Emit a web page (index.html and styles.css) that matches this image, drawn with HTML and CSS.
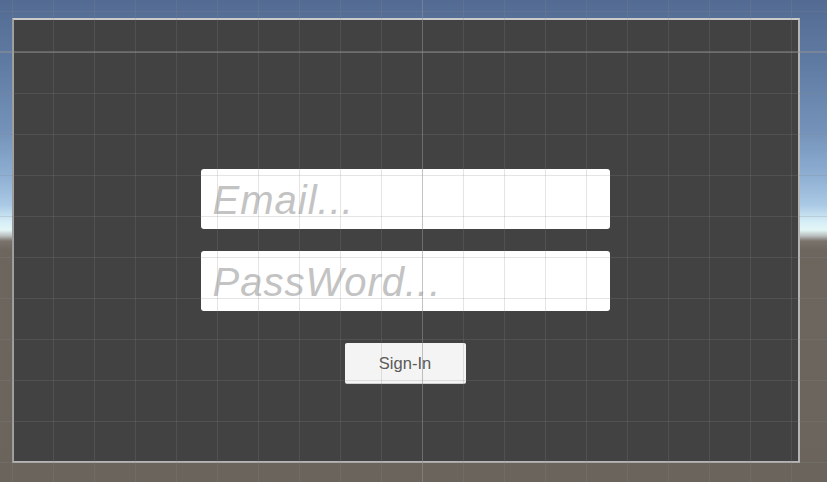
FILE: index.html
```html
<!DOCTYPE html>
<html lang="en">
<head>
<meta charset="utf-8">
<title>Sign-In</title>
<link rel="stylesheet" href="styles.css">
</head>
<body>
<div class="scene">
  <div class="canvas">
    <form class="login">
      <input class="field" type="email" placeholder="Email...">
      <input class="field" type="password" placeholder="PassWord...">
      <button class="signin" type="button">Sign-In</button>
    </form>
  </div>
</div>
<div class="grid"></div>
</body>
</html>
```

FILE: styles.css
```css
html, body {
  margin: 0;
  padding: 0;
  width: 827px;
  height: 482px;
  overflow: hidden;
}

body {
  font-family: "Liberation Sans", Arial, sans-serif;
  background: linear-gradient(to bottom,
    #536b92 0px,
    #5f7aa2 60px,
    #7492b9 130px,
    #8eaed2 175px,
    #aac9e5 205px,
    #d6eef6 222px,
    #e4f6f6 230px,
    #b8bcbc 236px,
    #7a736c 241px,
    #6c665f 250px,
    #6a645d 482px);
}

.scene {
  padding: 18px 0 0 12px;
}

.canvas {
  box-sizing: border-box;
  width: 788px;
  height: 445px;
  background: #424242;
  border-top: 2px solid #cacaca;
  border-left: 2px solid #a2a2a2;
  border-right: 2px solid #b4b4b4;
  border-bottom: 2px solid #b4b4b4;
}

.login {
  display: flex;
  flex-direction: column;
  align-items: center;
  padding-top: 149px;
  padding-right: 2px;
  margin: 0;
}

.field {
  box-sizing: border-box;
  width: 409px;
  height: 60px;
  margin: 0 0 22px 0;
  padding: 2px 12px 0 12px;
  border: none;
  border-radius: 3px;
  background: #ffffff;
  font-family: "Liberation Sans", Arial, sans-serif;
  font-size: 40px;
  font-style: italic;
  letter-spacing: 1px;
  color: #333;
  outline: none;
}

.field::placeholder {
  color: #c3c3c3;
  opacity: 1;
}

.signin {
  box-sizing: border-box;
  margin-top: 10px;
  width: 121px;
  height: 40px;
  border: none;
  border-radius: 2px;
  background: #f4f4f4;
  box-shadow: 0 1px 0 #cfcfcf;
  font-family: "Liberation Sans", Arial, sans-serif;
  font-size: 16.5px;
  color: #5a5a5a;
  padding: 0;
}

.grid {
  position: fixed;
  left: 0;
  top: 0;
  width: 827px;
  height: 482px;
  pointer-events: none;
  background-image:
    linear-gradient(to bottom, rgba(150,150,150,0.42) 2px, transparent 2px),
    linear-gradient(to right, rgba(150,150,150,0.42) 1px, transparent 1px),
    linear-gradient(to right, rgba(135,135,135,0.22) 1px, transparent 1px),
    linear-gradient(to bottom, rgba(135,135,135,0.22) 1px, transparent 1px);
  background-size:
    827px 482px,
    827px 482px,
    41px 41px,
    41px 41px;
  background-position:
    0 51px,
    422px 0,
    12px 11px,
    12px 11px;
  background-repeat: no-repeat, no-repeat, repeat, repeat;
}
```
